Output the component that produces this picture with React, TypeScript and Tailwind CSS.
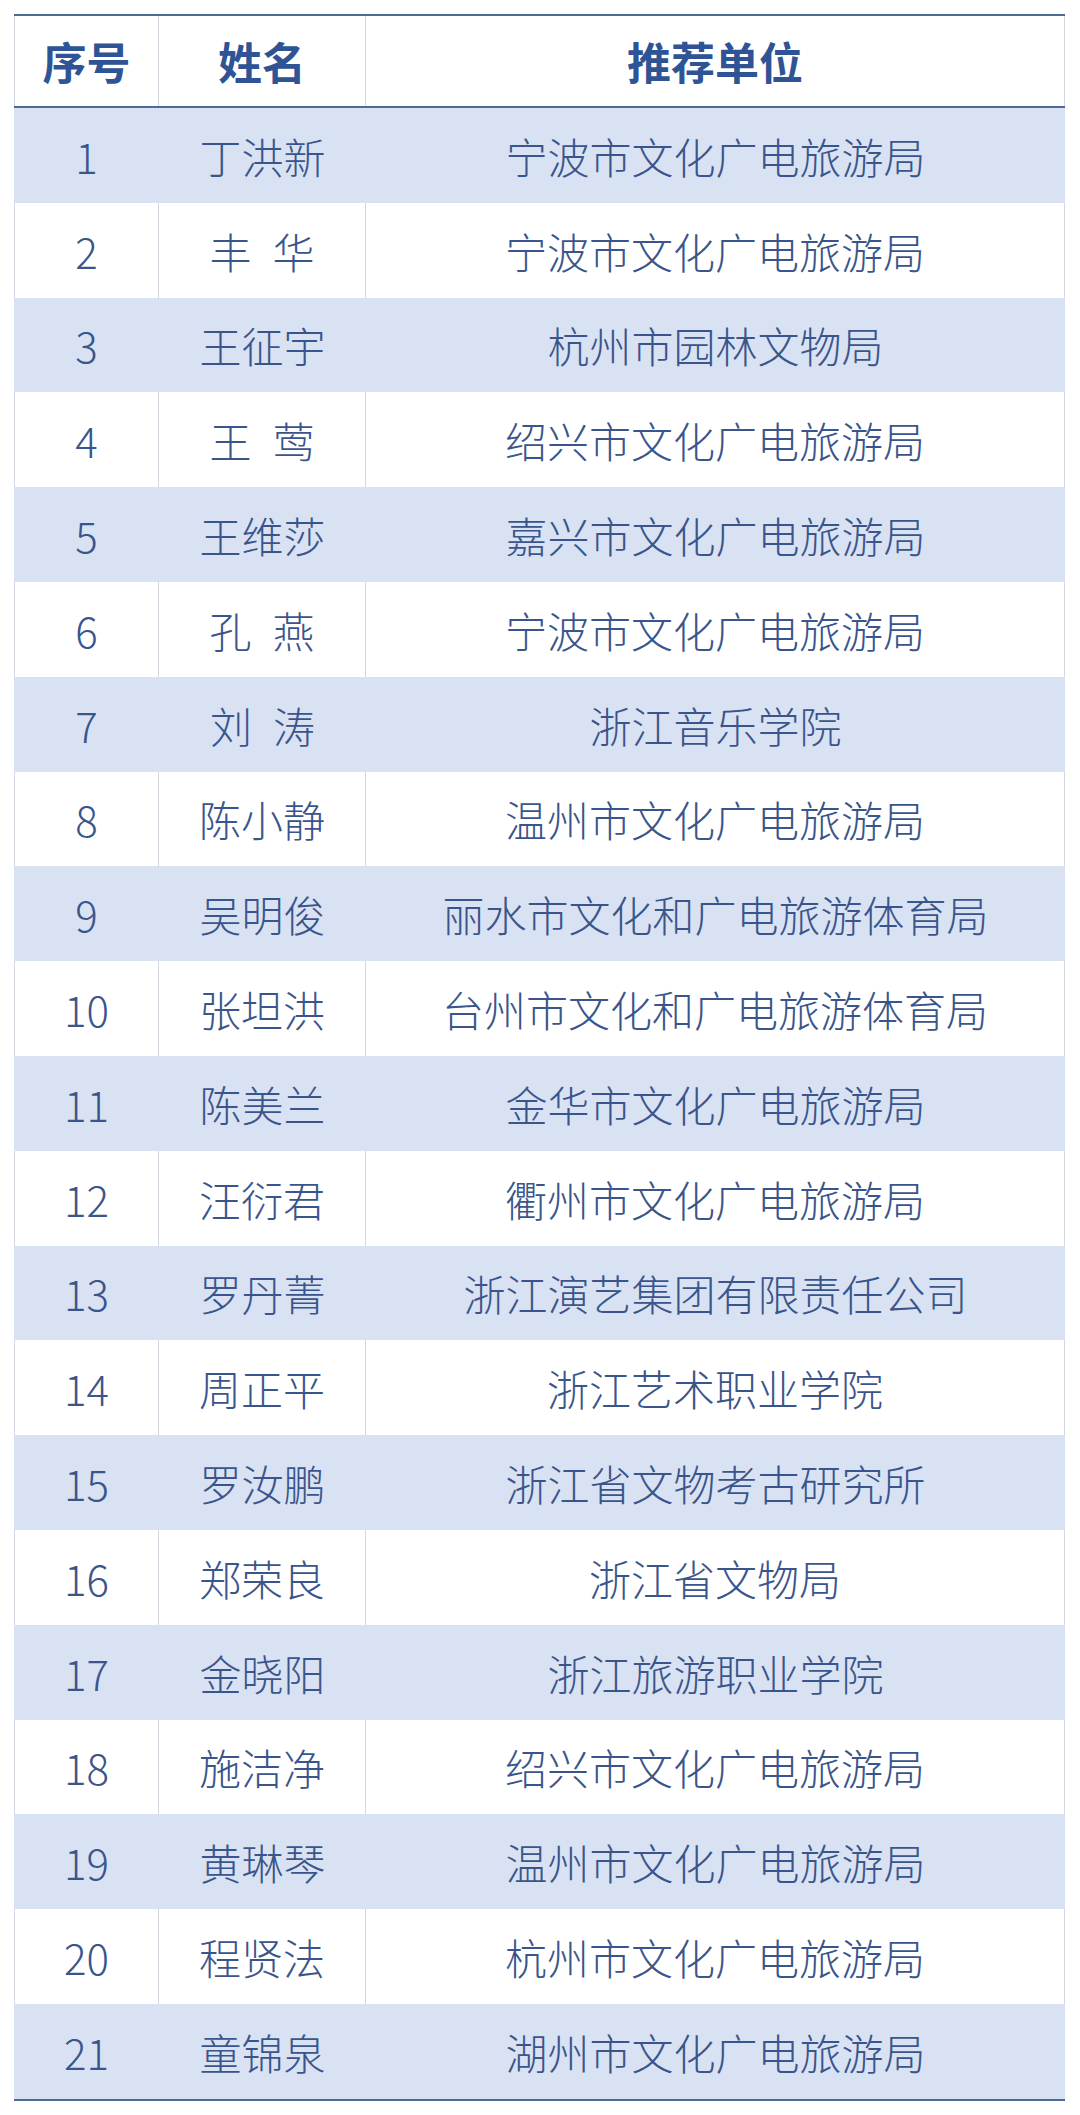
const rows: [string, string][] = [
  ["丁洪新", "宁波市文化广电旅游局"],
  ["丰 华", "宁波市文化广电旅游局"],
  ["王征宇", "杭州市园林文物局"],
  ["王 莺", "绍兴市文化广电旅游局"],
  ["王维莎", "嘉兴市文化广电旅游局"],
  ["孔 燕", "宁波市文化广电旅游局"],
  ["刘 涛", "浙江音乐学院"],
  ["陈小静", "温州市文化广电旅游局"],
  ["吴明俊", "丽水市文化和广电旅游体育局"],
  ["张坦洪", "台州市文化和广电旅游体育局"],
  ["陈美兰", "金华市文化广电旅游局"],
  ["汪衍君", "衢州市文化广电旅游局"],
  ["罗丹菁", "浙江演艺集团有限责任公司"],
  ["周正平", "浙江艺术职业学院"],
  ["罗汝鹏", "浙江省文物考古研究所"],
  ["郑荣良", "浙江省文物局"],
  ["金晓阳", "浙江旅游职业学院"],
  ["施洁净", "绍兴市文化广电旅游局"],
  ["黄琳琴", "温州市文化广电旅游局"],
  ["程贤法", "杭州市文化广电旅游局"],
  ["童锦泉", "湖州市文化广电旅游局"],
];

const font = "font-['Noto_Sans_CJK_SC','Noto_Sans',sans-serif]";

// two-character names get a half-width gap between the characters
function Name({ value }: { value: string }) {
  const parts = value.split(" ");
  if (parts.length === 1) return <>{value}</>;
  return (
    <>
      {parts[0]}
      <span className="inline-block w-[21px]" />
      {parts[1]}
    </>
  );
}

export default function App() {
  return (
    <div className={`min-h-[2115px] bg-white pt-[14px] ${font}`}>
      <div className="mx-[14px] w-[1051px] border-y-2 border-[#4c6a95]">
        {/* header */}
        <div className="grid h-[92px] grid-cols-[145px_207px_1fr] border-b-2 border-[#4c6a95] text-[44px] font-bold text-[#2e5495]">
          <div className="flex items-center justify-center border-x border-[#d3d8e0]">序号</div>
          <div className="flex items-center justify-center border-r border-[#d3d8e0]">姓名</div>
          <div className="flex items-center justify-center border-r border-[#d3d8e0]">推荐单位</div>
        </div>

        {rows.map(([name, unit], i) => {
          const striped = i % 2 === 0;
          const cell = striped
            ? "flex items-center justify-center"
            : "flex items-center justify-center border-r border-[#d3d8e0]";
          return (
            <div
              key={i}
              className={`grid h-[94.8px] grid-cols-[145px_207px_1fr] text-[42px] font-light text-[#3a558b] ${
                striped ? "bg-[#d9e2f3]" : "bg-white"
              }`}
            >
              <div className={`${cell} ${striped ? "" : "border-l"}`}>{i + 1}</div>
              <div className={cell}>
                <Name value={name} />
              </div>
              <div className={cell}>{unit}</div>
            </div>
          );
        })}
      </div>
    </div>
  );
}
